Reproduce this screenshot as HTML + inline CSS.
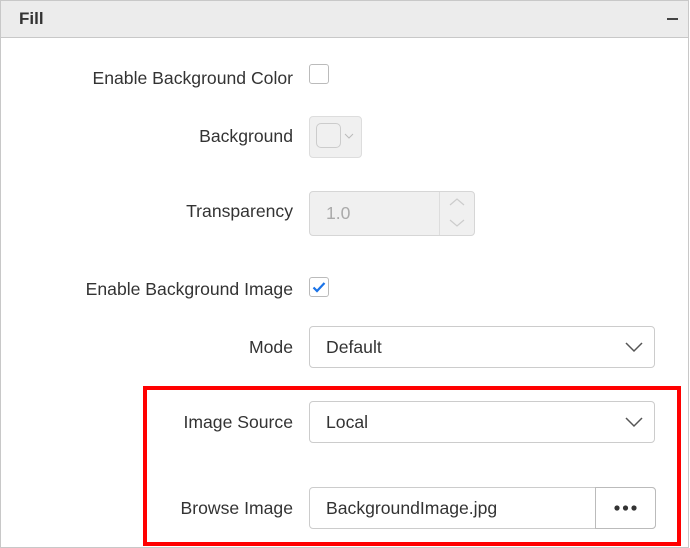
<!DOCTYPE html>
<html><head><style>
*{box-sizing:border-box;margin:0;padding:0}
body{width:690px;height:548px;background:#fff;font-family:"Liberation Sans",sans-serif;position:relative;overflow:hidden;color:#333}
.frame{position:absolute;left:0;top:0;width:689px;height:548px;border:1px solid #c8c8c8;border-top:1px solid #c8c8c8}
.hdr{position:absolute;left:0;top:0;width:689px;height:38px;background:#ececec;border:1px solid #c8c8c8}
.hdr b{position:absolute;left:18px;top:8px;font-size:17px;color:#333}
.min{position:absolute;left:666px;top:17px;width:11px;height:2px;background:#444}
.lbl{position:absolute;right:397px;font-size:17.6px;color:#333;white-space:nowrap}
.cb{position:absolute;left:309px;width:20px;height:20px;border:1px solid #bbb;border-radius:3px;background:#fff}
.inp{position:absolute;left:309px;border:1px solid #ccc;border-radius:4px;background:#fff;font-size:17.6px;color:#333;padding-left:16px}
.red{position:absolute;left:143px;top:386px;width:538px;height:160px;border:4px solid #f00}
</style></head><body>
<div class="frame"></div>
<div class="hdr"><b>Fill</b><div class="min"></div></div>

<div class="lbl" style="top:68px">Enable Background Color</div>
<div class="cb" style="top:64px"></div>

<div class="lbl" style="top:126px">Background</div>
<div class="inp" style="top:116px;width:53px;height:42px;background:#f0f0f0;border-color:#ddd"></div>
<div style="position:absolute;left:316px;top:123px;width:25px;height:25px;border:1px solid #ccc;border-radius:5px"></div>
<svg style="position:absolute;left:342px;top:131px" width="14" height="10"><path d="M3 3l4 4 4-4" fill="none" stroke="#bbb" stroke-width="1"/></svg>

<div class="lbl" style="top:201px">Transparency</div>
<div class="inp" style="top:191px;width:166px;height:45px;background:#f0f0f0;border-color:#d6d6d6;color:#aaa;line-height:43px">1.0</div>
<div style="position:absolute;left:439px;top:192px;width:1px;height:43px;background:#ddd"></div>
<svg style="position:absolute;left:440px;top:192px" width="34" height="43"><path d="M10 13l7-6 7 6M10 28l7 6 7-6" fill="none" stroke="#ccc" stroke-width="1.2"/></svg>

<div class="lbl" style="top:279px">Enable Background Image</div>
<div class="cb" style="top:277px"></div>
<svg style="position:absolute;left:309px;top:277px" width="20" height="20"><path d="M4.5 10.5l3.5 3.5 7.5-8" fill="none" stroke="#1a73e8" stroke-width="2.2"/></svg>

<div class="lbl" style="top:337px">Mode</div>
<div class="inp" style="top:326px;width:346px;height:42px;line-height:40px">Default</div>
<svg style="position:absolute;left:624px;top:340px" width="20" height="14"><path d="M2 3l8 8 8-8" fill="none" stroke="#555" stroke-width="1.5"/></svg>

<div class="lbl" style="top:412px">Image Source</div>
<div class="inp" style="top:401px;width:346px;height:42px;line-height:40px">Local</div>
<svg style="position:absolute;left:624px;top:415px" width="20" height="14"><path d="M2 3l8 8 8-8" fill="none" stroke="#555" stroke-width="1.5"/></svg>

<div class="lbl" style="top:498px">Browse Image</div>
<div class="inp" style="top:487px;width:347px;height:42px;line-height:40px">BackgroundImage.jpg</div>
<div style="position:absolute;left:595px;top:487px;width:61px;height:42px;border:1px solid #bbb;border-radius:0 4px 4px 0;background:#fff"></div>
<svg style="position:absolute;left:595px;top:487px" width="61" height="42"><circle cx="22" cy="21" r="2.6" fill="#333"/><circle cx="30.5" cy="21" r="2.6" fill="#333"/><circle cx="39" cy="21" r="2.6" fill="#333"/></svg>

<div class="red"></div>
</body></html>
